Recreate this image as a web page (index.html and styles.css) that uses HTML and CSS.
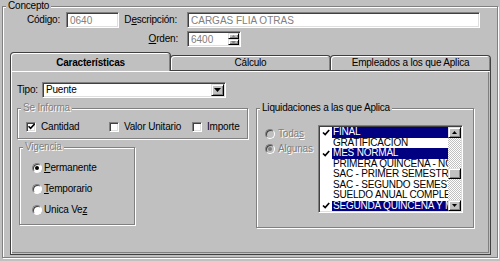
FILE: index.html
```html
<!DOCTYPE html>
<html lang="es">
<head>
    <meta charset="UTF-8">
    <meta name="viewport" content="width=device-width, initial-scale=1.0">
    <title>Concepto</title>
    <link rel="stylesheet" href="styles.css">
</head>
<body>

    <fieldset class="group concepto">
        <legend>Concepto</legend>

        <div class="top-row">
            <label class="lbl lbl-codigo" for="codigo">Código:</label>
            <input class="text-box sunken codigo" id="codigo" value="0640" disabled>
            <label class="lbl lbl-desc" for="descripcion">D<u>e</u>scripción:</label>
            <input class="text-box sunken descripcion" id="descripcion" value="CARGAS FLIA OTRAS" disabled>
        </div>

        <div class="top-row orden-row">
            <label class="lbl lbl-orden" for="orden"><u>O</u>rden:</label>
            <div class="spinner sunken">
                <input class="spin-text" id="orden" value="6400" disabled>
                <div class="spin-buttons">
                    <span class="spin-btn raised">
                        <svg width="5" height="3" viewBox="0 0 5 3"><polygon points="0,3 5,3 2.5,0" fill="#808080"/></svg>
                    </span>
                    <span class="spin-btn raised">
                        <svg width="5" height="3" viewBox="0 0 5 3"><polygon points="0,0 5,0 2.5,3" fill="#808080"/></svg>
                    </span>
                </div>
            </div>
        </div>

        <div class="tabs">
            <div class="tab active">Características</div>
            <div class="tab">Cálculo</div>
            <div class="tab">Empleados a los que Aplica</div>
        </div>

        <div class="tab-panel">
            <div class="tipo-row">
                <label class="lbl lbl-tipo">Tipo:</label>
                <div class="combo sunken">
                    <span class="combo-text">Puente</span>
                    <span class="combo-btn raised">
                        <svg width="7" height="4" viewBox="0 0 7 4"><polygon points="0,0 7,0 3.5,4" fill="#000"/></svg>
                    </span>
                </div>
            </div>

            <div class="panel-body">
                <div class="left-col">
                    <fieldset class="group se-informa">
                        <legend class="disabled-text">Se Informa</legend>
                        <div class="checks">
                            <div class="check">
                                <span class="check-box sunken">
                                    <svg width="7" height="7" viewBox="0 0 7 7"><path d="M0.5 3.2 L2.6 5.4 L6.6 1" stroke="#000" stroke-width="1.6" fill="none"/></svg>
                                </span>
                                Cantidad
                            </div>
                            <div class="check"><span class="check-box sunken"></span>Valor Unitario</div>
                            <div class="check"><span class="check-box sunken"></span>Importe</div>
                        </div>
                    </fieldset>

                    <fieldset class="group vigencia">
                        <legend class="disabled-text">Vigencia</legend>
                        <div class="radios">
                            <div class="radio-row"><span class="radio on"></span><span><u>P</u>ermanente</span></div>
                            <div class="radio-row"><span class="radio"></span><span><u>T</u>emporario</span></div>
                            <div class="radio-row"><span class="radio"></span><span>Unica Ve<u>z</u></span></div>
                        </div>
                    </fieldset>
                </div>

                <fieldset class="group liquidaciones">
                    <legend>Liquidaciones a las que Aplica</legend>
                    <div class="liq-body">
                        <div class="liq-radios">
                            <div class="radio-row disabled-text"><span class="radio disabled"></span><span>Toda<u>s</u></span></div>
                            <div class="radio-row disabled-text"><span class="radio disabled on"></span><span>Algunas</span></div>
                        </div>

                        <div class="list sunken">
                            <div class="list-items">
                                <div class="list-item selected">
                                    <span class="tick"><svg width="8" height="7" viewBox="0 0 8 7"><path d="M1 3.5 L3.2 5.6 L7.2 1" stroke="#000" stroke-width="1.7" fill="none"/></svg></span>
                                    <span class="item-text">FINAL</span>
                                </div>
                                <div class="list-item">
                                    <span class="tick"></span>
                                    <span class="item-text">GRATIFICACION</span>
                                </div>
                                <div class="list-item selected">
                                    <span class="tick"><svg width="8" height="7" viewBox="0 0 8 7"><path d="M1 3.5 L3.2 5.6 L7.2 1" stroke="#000" stroke-width="1.7" fill="none"/></svg></span>
                                    <span class="item-text">MES NORMAL</span>
                                </div>
                                <div class="list-item">
                                    <span class="tick"></span>
                                    <span class="item-text">PRIMERA QUINCENA - NORMAL</span>
                                </div>
                                <div class="list-item">
                                    <span class="tick"></span>
                                    <span class="item-text">SAC - PRIMER SEMESTRE</span>
                                </div>
                                <div class="list-item">
                                    <span class="tick"></span>
                                    <span class="item-text">SAC - SEGUNDO SEMESTRE</span>
                                </div>
                                <div class="list-item">
                                    <span class="tick"></span>
                                    <span class="item-text">SUELDO ANUAL COMPLEMENTARIO</span>
                                </div>
                                <div class="list-item selected">
                                    <span class="tick"><svg width="8" height="7" viewBox="0 0 8 7"><path d="M1 3.5 L3.2 5.6 L7.2 1" stroke="#000" stroke-width="1.7" fill="none"/></svg></span>
                                    <span class="item-text">SEGUNDA QUINCENA Y MES</span>
                                </div>
                            </div>
                            <div class="scrollbar">
                                <span class="scroll-btn raised">
                                    <svg width="5" height="3" viewBox="0 0 5 3"><polygon points="0,3 5,3 2.5,0" fill="#000"/></svg>
                                </span>
                                <div class="scroll-track">
                                    <div class="scroll-thumb raised"></div>
                                </div>
                                <span class="scroll-btn raised">
                                    <svg width="5" height="3" viewBox="0 0 5 3"><polygon points="0,0 5,0 2.5,3" fill="#000"/></svg>
                                </span>
                            </div>
                        </div>
                    </div>
                </fieldset>
            </div>
        </div>
    </fieldset>

</body>
</html>
```

FILE: styles.css
```css
* {
    box-sizing: border-box;
}

body {
    margin: 0;
    width: 500px;
    height: 261px;
    overflow: hidden;
    background: #c0c0c0;
    color: #000;
    font-family: "Liberation Sans", Arial, sans-serif;
    font-size: 10px;
    letter-spacing: -0.2px;
}

/* etched group frame */
.group {
    margin: 0;
    padding: 0;
    min-width: 0;
    border: 1px solid #808080;
    box-shadow: 1px 1px 0 #fff, inset 1px 1px 0 #fff;
}

.group legend {
    margin-left: 3px;
    padding: 0 2px;
    line-height: 12px;
    background: #c0c0c0;
}

.sunken {
    border: 1px solid;
    border-color: #808080 #fff #fff #808080;
    box-shadow: inset 1px 1px 0 #404040, inset -1px -1px 0 #dfdfdf;
    background: #fff;
}

.raised {
    border: 1px solid;
    border-color: #dfdfdf #000 #000 #dfdfdf;
    box-shadow: inset 1px 1px 0 #fff, inset -1px -1px 0 #808080;
    background: #c0c0c0;
}

.disabled-text {
    color: #808080;
    text-shadow: 1px 1px 0 #fff;
}

.concepto {
    margin: 0 2px;
    height: 258px;
}

.top-row {
    display: flex;
    align-items: center;
    height: 16px;
}

.lbl {
    line-height: 16px;
    text-align: right;
}

.lbl-codigo {
    width: 63px;
    padding-right: 6px;
}

.lbl-desc {
    width: 68px;
    padding-right: 10px;
}

.text-box {
    height: 16px;
    padding: 0 3px;
    font: inherit;
    color: #808080;
}

.codigo {
    width: 53px;
}

.descripcion {
    width: 293px;
}

.orden-row {
    margin-top: 3px;
    padding-left: 116px;
}

.lbl-orden {
    width: 68px;
    padding-right: 9px;
}

.spinner {
    width: 54px;
    height: 16px;
    padding: 1px;
    display: flex;
}

.spin-text {
    flex: 1;
    min-width: 0;
    border: 0;
    padding: 0 2px;
    background: transparent;
    font: inherit;
    color: #808080;
}

.spin-buttons {
    width: 11px;
    display: flex;
    flex-direction: column;
}

.spin-btn {
    flex: 1;
    display: flex;
    align-items: center;
    justify-content: center;
}

/* tabs */
.tabs {
    display: flex;
    align-items: flex-end;
    height: 18px;
    margin: 5px 0 0 7px;
}

.tab {
    width: 161px;
    height: 15px;
    margin-left: -1px;
    border: 1px solid #404040;
    border-bottom: 0;
    border-radius: 4px 4px 0 0;
    box-shadow: inset 1px 1px 0 #fff, inset -1px 0 0 #808080;
    line-height: 13px;
    text-align: center;
    white-space: nowrap;
}

.tab:first-child {
    margin-left: 0;
}

.tab.active {
    position: relative;
    z-index: 1;
    height: 19px;
    margin-bottom: -1px;
    padding-top: 3px;
    background: #c0c0c0;
    font-weight: bold;
}

.tab-panel {
    width: 481px;
    height: 185px;
    margin-left: 7px;
    padding: 11px 0 0 6px;
    border: 1px solid #404040;
    box-shadow: inset 1px 1px 0 #fff, inset -1px -1px 0 #c0c0c0, inset -2px -2px 0 #808080;
}

.tipo-row {
    display: flex;
    align-items: center;
    height: 16px;
}

.lbl-tipo {
    width: 25px;
    text-align: left;
}

.combo {
    width: 184px;
    height: 16px;
    padding: 1px;
    display: flex;
    align-items: center;
}

.combo-text {
    flex: 1;
    padding-left: 2px;
    line-height: 12px;
}

.combo-btn {
    width: 13px;
    height: 12px;
    display: flex;
    align-items: center;
    justify-content: center;
}

.panel-body {
    display: flex;
    gap: 8px;
    margin-top: 4px;
}

.left-col {
    width: 231px;
    display: flex;
    flex-direction: column;
}

.se-informa {
    height: 37px;
}

.checks {
    display: grid;
    grid-template-columns: 83px 83px auto;
    padding: 6px 0 0 8px;
}

.check {
    display: flex;
    align-items: center;
    gap: 5px;
    line-height: 13px;
}

.check-box {
    width: 10px;
    height: 10px;
    display: flex;
    align-items: center;
    justify-content: center;
}

.vigencia {
    width: 116px;
    height: 84px;
    margin: 2px 0 0 2px;
}

.radios {
    padding: 4px 0 0 12px;
}

.radio-row {
    display: flex;
    align-items: center;
    gap: 2px;
    height: 21px;
}

.radio {
    width: 10px;
    height: 10px;
    flex: none;
    border-radius: 50%;
    border: 1px solid;
    border-color: #808080 #fff #fff #808080;
    box-shadow: inset 1px 1px 0 #404040;
    background: #fff;
    display: flex;
    align-items: center;
    justify-content: center;
}

.radio.on::after {
    content: "";
    width: 4px;
    height: 4px;
    border-radius: 50%;
    background: #000;
}

.radio.disabled {
    background: #c0c0c0;
}

.radio.disabled.on::after {
    background: #808080;
}

/* liquidaciones */
.liquidaciones {
    width: 218px;
    height: 126px;
}

.liq-body {
    display: flex;
    padding: 11px 0 0 8px;
}

.liq-radios {
    width: 53px;
    padding-top: 1px;
}

.liq-radios .radio-row {
    height: 15px;
    gap: 3px;
}

.list {
    width: 145px;
    height: 88px;
    padding: 1px;
    display: flex;
}

.list-items {
    flex: 1;
    min-width: 0;
}

.list-item {
    display: flex;
    height: 10.5px;
    line-height: 10.5px;
}

.tick {
    width: 12px;
    flex: none;
    display: flex;
    align-items: center;
    justify-content: center;
}

.item-text {
    flex: 1;
    padding-left: 1px;
    overflow: hidden;
    white-space: nowrap;
}

.list-item.selected .item-text {
    background: #000080;
    color: #fff;
}

.scrollbar {
    width: 13px;
    display: flex;
    flex-direction: column;
}

.scroll-btn {
    height: 11px;
    flex: none;
    display: flex;
    align-items: center;
    justify-content: center;
}

.scroll-track {
    flex: 1;
    background: repeating-conic-gradient(#fff 0 25%, #c0c0c0 0 50%) 0 0 / 2px 2px;
}

.scroll-thumb {
    height: 11px;
    margin-top: 30px;
}
```
